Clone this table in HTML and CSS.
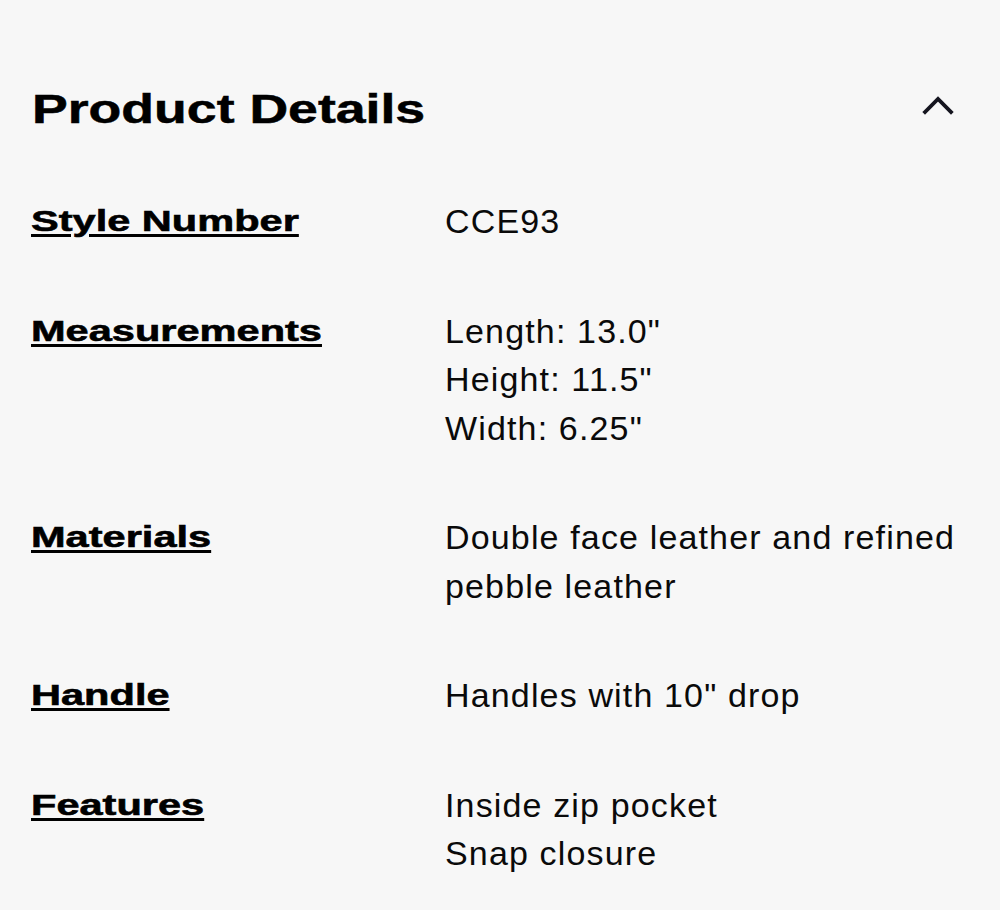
FILE: index.html
```html
<!DOCTYPE html>
<html lang="en">
<head>
<meta charset="utf-8">
<title>Product Details</title>
<link rel="stylesheet" href="styles.css">
</head>
<body>
<section class="details">
  <header class="details-head">
    <h2 class="details-title"><span class="wide">Product Details</span></h2>
    <button class="toggle" aria-label="Collapse">
      <svg width="34" height="22" viewBox="0 0 34 22" aria-hidden="true">
        <path d="M4 17 L17 4 L30 17" fill="none" stroke="#15151f" stroke-width="3.8" stroke-linecap="square" stroke-linejoin="miter"/>
      </svg>
    </button>
  </header>
  <dl class="spec-list">
    <dt class="spec-label"><a class="wide wide-label" href="#">Style Number</a></dt>
    <dd class="spec-value">CCE93</dd>

    <dt class="spec-label"><a class="wide wide-label" href="#">Measurements</a></dt>
    <dd class="spec-value">Length: 13.0"<br>Height: 11.5"<br>Width: 6.25"</dd>

    <dt class="spec-label"><a class="wide wide-label" href="#">Materials</a></dt>
    <dd class="spec-value">Double face leather and refined pebble leather</dd>

    <dt class="spec-label"><a class="wide wide-label" href="#">Handle</a></dt>
    <dd class="spec-value">Handles with 10" drop</dd>

    <dt class="spec-label"><a class="wide wide-label" href="#">Features</a></dt>
    <dd class="spec-value">Inside zip pocket<br>Snap closure</dd>
  </dl>
</section>
</body>
</html>
```
FILE: styles.css
```css
html, body {
  margin: 0;
  padding: 0;
  background: #f7f7f7;
}

body {
  font-family: "Liberation Sans", Arial, sans-serif;
  color: #000;
}

.details {
  padding: 85px 32px 0 31px;
}

.details-head {
  display: flex;
  justify-content: space-between;
  align-items: center;
  padding-right: 13px;
  padding-left: 1px;
  margin-bottom: 64px;
}

.details-title {
  margin: 0;
  font-size: 40px;
  line-height: 48px;
  font-weight: 700;
}

.wide {
  display: inline-block;
  transform: scaleX(1.34);
  transform-origin: 0 50%;
  -webkit-text-stroke: 0.5px #000;
}

.wide-label {
  transform: scaleX(1.385);
  -webkit-text-stroke: 0.6px #000;
}

.toggle {
  border: 0;
  background: none;
  padding: 0;
  margin-top: -6px;
  display: flex;
}

.spec-list {
  display: grid;
  grid-template-columns: 414px 1fr;
  row-gap: 61px;
  margin: 0;
}

.spec-label {
  margin: 0;
  font-size: 30px;
  line-height: 48.5px;
  font-weight: 700;
}

.spec-label a {
  color: #000;
  text-decoration: underline;
  text-decoration-thickness: 2.5px;
  text-underline-offset: 3px;
}

.spec-value {
  margin: 0;
  font-size: 34px;
  line-height: 48.5px;
  letter-spacing: 1.15px;
  color: #0a0a0a;
}
```
